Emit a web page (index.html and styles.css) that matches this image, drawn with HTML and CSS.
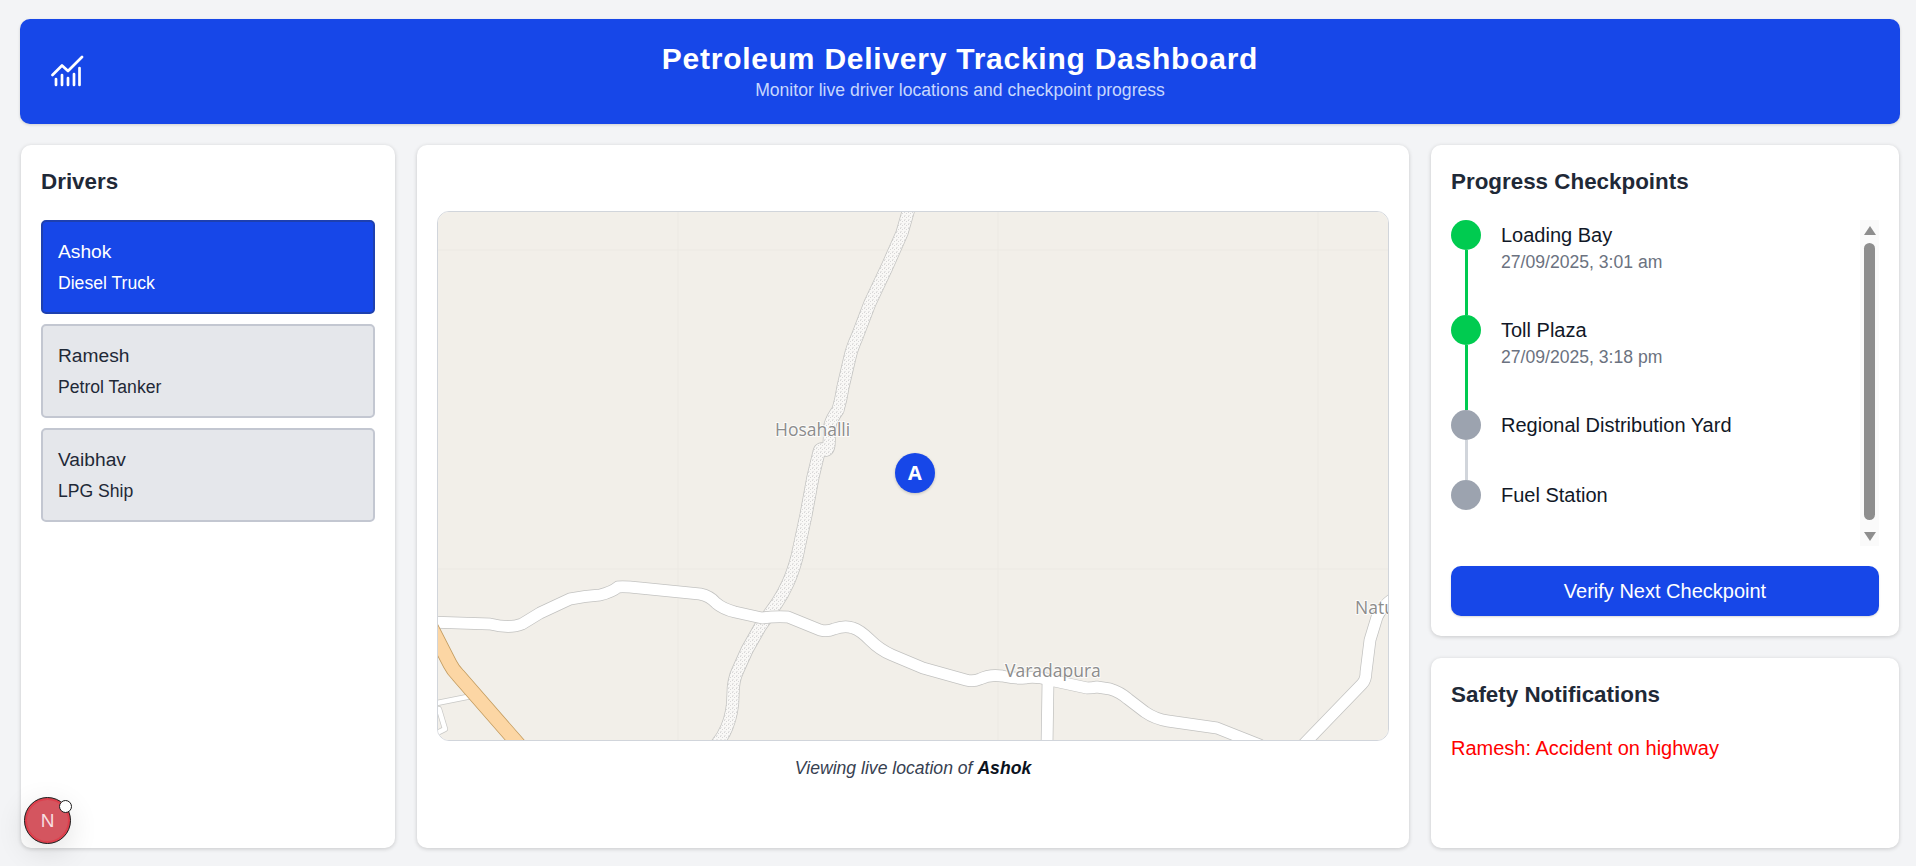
FILE: index.html
```html
<!DOCTYPE html>
<html lang="en">
<head>
    <meta charset="UTF-8">
    <meta name="viewport" content="width=device-width, initial-scale=1.0">
    <title>Petroleum Delivery Tracking Dashboard</title>
    <link rel="stylesheet" href="styles.css">
</head>
<body>
    <header class="header">
        <svg class="header-icon" viewBox="0 0 34 32" fill="none" stroke="white" stroke-width="2.7" stroke-linecap="round" stroke-linejoin="round">
            <path d="M1.5 20 L11 10.5 L17 16 L31 2"/>
            <path d="M5 24V30M11 20V30M17 23V30M23 19V30M28.500 13V30"/>
        </svg>
        <div class="header-text">
            <h1>Petroleum Delivery Tracking Dashboard</h1>
            <p>Monitor live driver locations and checkpoint progress</p>
        </div>
    </header>

    <main class="grid">
        <section class="card">
            <h2>Drivers</h2>
            <div class="driver-list">
                <div class="driver active">
                    <div class="driver-name">Ashok</div>
                    <div class="driver-type">Diesel Truck</div>
                </div>
                <div class="driver">
                    <div class="driver-name">Ramesh</div>
                    <div class="driver-type">Petrol Tanker</div>
                </div>
                <div class="driver">
                    <div class="driver-name">Vaibhav</div>
                    <div class="driver-type">LPG Ship</div>
                </div>
            </div>
        </section>

        <section class="card map-card">
            <div class="map">
                <svg class="map-svg" viewBox="438 212 950 528">
                    <defs>
                        <pattern id="dots" width="4" height="4" patternUnits="userSpaceOnUse">
                            <rect width="4" height="4" fill="#f9f8f6"/>
                            <circle cx="0.500" cy="0.500" r="0.5" fill="#cdcdcd"/>
                            <circle cx="2.500" cy="1.500" r="0.5" fill="#cdcdcd"/>
                            <circle cx="1" cy="3.500" r="0.5" fill="#cdcdcd"/>
                        </pattern>
                        <path id="track" d="M910 205L902 233L887 267L870 303L857 337Q852 348 850 357L843 387Q841 400 838 410Q832 418 830 425L829 445Q828 452 824 450Q820 447 819 452L813 477L806 515L797 557Q793 572 788 583Q783 594 777 603L760 627L747 650L738 670Q733 680 733 695Q733 712 727 727Q723 737 716 745"/>
                        <path id="main-road" d="M432 622L490 624Q510 629 522 624L540 613L570 599Q585 596 600 595Q612 592 618 587Q623 586 640 588L700 594Q710 596 716 603Q723 609 735 612L762 618Q776 616 788 617L820 630Q827 632 834 629Q845 625 853 628Q860 630 870 640Q880 650 892 655L923 668L966 680Q973 682 980 679Q990 674 1002 676Q1015 679 1025 678Q1035 676 1050 680L1087 688Q1092 688 1097 687L1110 689Q1120 692 1128 699L1145 712Q1155 719 1168 721L1217 728L1260 745"/>
                        <path id="branch-road" d="M1048 683L1047 745"/>
                        <path id="right-road" d="M1303 745L1362 684Q1366 680 1366 672L1370 640L1377 617Q1381 607 1395 597"/>
                        <path id="small-road" d="M437 703L472 696M439 709L445 729L437 733"/>
                        <path id="highway" d="M430 625L450 664Q453 670 458 675L519 745"/>
                    </defs>
                    <rect x="438" y="212" width="950" height="528" fill="#f2efe9"/>
                    <path d="M678 212V740M998 212V740M1318 212V740M438 250H1388M438 569H1388" stroke="#ece9e3" stroke-width="1"/>

                    <g class="roads" fill="none" stroke-linejoin="round" stroke-linecap="round">
                        <use href="#small-road" stroke="#c8c8c6" stroke-width="6"/>
                        <use href="#small-road" stroke="#ffffff" stroke-width="4.500"/>

                        <use href="#track" stroke="#c4c4c2" stroke-width="13"/>
                        <use href="#track" stroke="url(#dots)" stroke-width="11.500"/>

                        <g stroke="#c2c2c0" stroke-width="12.500">
                            <use href="#main-road"/>
                            <use href="#branch-road"/>
                            <use href="#right-road"/>
                        </g>
                        <g stroke="#ffffff" stroke-width="11">
                            <use href="#main-road"/>
                            <use href="#branch-road"/>
                            <use href="#right-road"/>
                        </g>

                        <use href="#highway" stroke="#c29b5f" stroke-width="15"/>
                        <use href="#highway" stroke="#fcd6a4" stroke-width="13.500"/>
                    </g>

                    <text class="map-label" x="775" y="436">Hosahalli</text>
                    <text class="map-label" x="1005" y="677">Varadapura</text>
                    <text class="map-label" x="1355" y="614">Natu</text>
                </svg>
                <div class="marker">A</div>
            </div>
            <p class="map-caption">Viewing live location of <strong>Ashok</strong></p>
        </section>

        <div class="right-col">
            <section class="card progress-card">
                <h2>Progress Checkpoints</h2>
                <div class="timeline-wrap">
                    <ul class="timeline">
                        <li class="step done">
                            <div class="step-mark"><span class="dot"></span><span class="line"></span></div>
                            <div class="step-text">
                                <div class="step-name">Loading Bay</div>
                                <div class="step-date">27/09/2025, 3:01 am</div>
                            </div>
                        </li>
                        <li class="step done">
                            <div class="step-mark"><span class="dot"></span><span class="line"></span></div>
                            <div class="step-text">
                                <div class="step-name">Toll Plaza</div>
                                <div class="step-date">27/09/2025, 3:18 pm</div>
                            </div>
                        </li>
                        <li class="step">
                            <div class="step-mark"><span class="dot"></span><span class="line"></span></div>
                            <div class="step-text">
                                <div class="step-name">Regional Distribution Yard</div>
                            </div>
                        </li>
                        <li class="step last">
                            <div class="step-mark"><span class="dot"></span></div>
                            <div class="step-text">
                                <div class="step-name">Fuel Station</div>
                            </div>
                        </li>
                    </ul>
                    <div class="scrollbar">
                        <span class="arrow-up"></span>
                        <span class="thumb"></span>
                        <span class="arrow-down"></span>
                    </div>
                </div>
                <button class="verify-btn">Verify Next Checkpoint</button>
            </section>

            <section class="card safety-card">
                <h2>Safety Notifications</h2>
                <p class="alert">Ramesh: Accident on highway</p>
            </section>
        </div>
    </main>

    <div class="next-badge">
        <span class="next-letter">N</span>
        <span class="next-dot"></span>
    </div>
</body>
</html>
```

FILE: styles.css
```css
*{
    padding: 0;
    margin: 0;
    box-sizing: border-box;
}
body{
    height: 866px;
    padding: 19px 16px 0 20px;
    background-color: #f3f4f6;
    font-family: "Liberation Sans", Arial, sans-serif;
    color: #1f2937;
    overflow: hidden;
    position: relative;
}

/* header */
.header{
    height: 105px;
    background-color: #1747e8;
    border-radius: 10px;
    color: white;
    display: flex;
    align-items: center;
    position: relative;
    box-shadow: 0 1px 3px rgba(0,0,0,0.15);
}
.header-icon{
    position: absolute;
    left: 31px;
    top: 36px;
    width: 34px;
    height: 32px;
}
.header-text{
    width: 100%;
    text-align: center;
}
.header h1{
    font-size: 30px;
    line-height: 36px;
    font-weight: bold;
    letter-spacing: 0.75px;
}
.header p{
    font-size: 17.6px;
    line-height: 26px;
    color: #c7d7fe;
}

/* columns */
.grid{
    display: grid;
    grid-template-columns: 374px 992px 468px;
    gap: 22px;
    height: 703px;
    margin-top: 21px;
    padding-left: 1px;
}
.card{
    background-color: white;
    border-radius: 10px;
    padding: 20px;
    box-shadow: 0 1px 4px rgba(0,0,0,0.18);
}
.card h2{
    font-size: 22.4px;
    line-height: 34px;
    font-weight: bold;
}

/* drivers */
.driver-list{
    display: flex;
    flex-direction: column;
    gap: 10px;
    margin-top: 21px;
}
.driver{
    height: 94px;
    padding: 15px 15px;
    background-color: #e5e7eb;
    border: 2px solid #c3c7d1;
    border-radius: 5px;
}
.driver.active{
    background-color: #1747e8;
    border-color: #1e40af;
    color: white;
}
.driver-name{
    font-size: 19.2px;
    line-height: 30px;
}
.driver-type{
    font-size: 17.6px;
    line-height: 26px;
    margin-top: 3px;
}

/* map */
.map-card{
    display: flex;
    flex-direction: column;
    justify-content: flex-start;
    padding-top: 66px;
}
.map{
    height: 530px;
    border: 1px solid #d1d5db;
    border-radius: 12px;
    overflow: hidden;
    position: relative;
}
.map-svg{
    display: block;
    width: 100%;
    height: 100%;
}
.roads{
    filter: blur(0.4px);
}
.map-label{
    font-family: "Open Sans", sans-serif;
    font-size: 17.5px;
    fill: #8c8c8c;
    stroke: rgba(255,255,255,0.8);
    stroke-width: 2px;
    paint-order: stroke;
}
.marker{
    position: absolute;
    left: 457px;
    top: 241px;
    width: 40px;
    height: 40px;
    border-radius: 50%;
    background-color: #1747e8;
    color: white;
    font-family: "Open Sans", sans-serif;
    font-size: 20px;
    font-weight: bold;
    line-height: 40px;
    text-align: center;
    box-shadow: 0 1px 3px rgba(0,0,0,0.2);
}
.map-caption{
    margin-top: 14px;
    font-size: 17.6px;
    line-height: 26px;
    font-style: italic;
    text-align: center;
    color: #374151;
}
.map-caption strong{
    color: #0b1220;
}

/* right column */
.right-col{
    display: flex;
    flex-direction: column;
    gap: 22px;
}
.progress-card{
    height: 491px;
}
.safety-card{
    flex: 1;
}
.timeline-wrap{
    display: flex;
    justify-content: space-between;
    height: 326px;
    margin-top: 21px;
}
.timeline{
    list-style: none;
    flex: 1;
}
.step{
    display: flex;
    gap: 20px;
}
.step-mark{
    width: 30px;
    display: flex;
    flex-direction: column;
    flex-shrink: 0;
}
.dot{
    width: 30px;
    height: 30px;
    border-radius: 50%;
    background-color: #9ca3af;
    flex-shrink: 0;
}
.line{
    width: 3px;
    flex: 1;
    margin-left: 14px;
    background-color: #d1d5db;
}
.done .dot,
.done .line{
    background-color: #00cb50;
}
.step-text{
    padding-bottom: 40px;
}
.last .step-text{
    padding-bottom: 0;
}
.step-name{
    font-size: 20px;
    line-height: 30px;
    color: #111827;
}
.step-date{
    font-size: 17.6px;
    line-height: 25px;
    color: #6b7280;
}

/* fake scrollbar, same look as the browser one */
.scrollbar{
    width: 19px;
    background-color: #fafafa;
    display: flex;
    flex-direction: column;
    align-items: center;
    padding-top: 6px;
    padding-bottom: 5px;
}
.arrow-up{
    border-left: 6.5px solid transparent;
    border-right: 6.5px solid transparent;
    border-bottom: 9px solid #8e8e8e;
}
.thumb{
    width: 11px;
    height: 277px;
    margin-top: 8px;
    margin-bottom: 12px;
    border-radius: 6px;
    background-color: #8e8e8e;
}
.arrow-down{
    border-left: 6.5px solid transparent;
    border-right: 6.5px solid transparent;
    border-top: 9px solid #8e8e8e;
}
.verify-btn{
    display: block;
    width: 100%;
    height: 50px;
    margin-top: 20px;
    background-color: #1747e8;
    color: white;
    border: none;
    border-radius: 10px;
    font-family: inherit;
    font-size: 20px;
    box-shadow: 0 1px 2px rgba(0,0,0,0.15);
}
.alert{
    margin-top: 21px;
    font-size: 20px;
    line-height: 30px;
    color: #ff0000;
}

/* dev badge in the corner */
.next-badge{
    position: absolute;
    left: 24px;
    top: 797px;
    width: 47px;
    height: 47px;
    border-radius: 50%;
    background-color: #d4555f;
    border: 1px solid #1a1a1a;
    box-shadow: inset 0 0 0 2px #dc3f4c, 0 8px 30px rgba(0,0,0,0.12);
    display: flex;
    align-items: center;
    justify-content: center;
}
.next-letter{
    color: #f7dfe1;
    font-size: 19px;
    line-height: 19px;
}
.next-dot{
    position: absolute;
    left: 34px;
    top: 2px;
    width: 13px;
    height: 13px;
    border-radius: 50%;
    background-color: white;
    border: 1.5px solid #1a1a1a;
}
```
